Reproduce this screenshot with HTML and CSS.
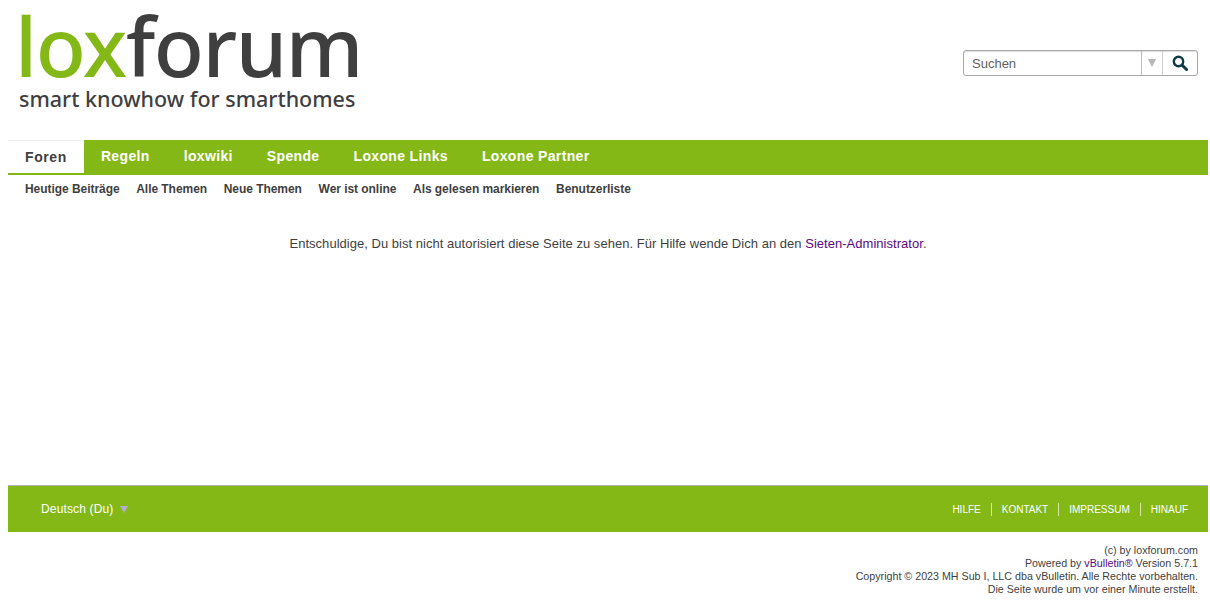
FILE: index.html
```html
<html>
	<head>
		<meta charset="utf-8">
		<title>loxforum</title>
		<link rel="stylesheet" href="styles.css">
	</head>
	<body>
		<div class="header">
			<a class="logo" href="#">
				<span class="logoName"><span class="logoLox">lox</span>forum</span>
				<span class="logoClaim">smart knowhow for smarthomes</span>
			</a>
			<div class="search">
				<div class="searchField">Suchen</div>
				<div class="searchArrow"><span class="arrowDown"></span></div>
				<div class="searchBtn">
					<svg width="16" height="16" viewBox="0 0 16 16">
						<circle cx="6.5" cy="6.5" r="4.7" fill="none" stroke="#0e3a46" stroke-width="2.4"/>
						<path d="M10 10 L14.5 14.5" stroke="#0e3a46" stroke-width="3" stroke-linecap="round"/>
					</svg>
				</div>
			</div>
		</div>
		<div class="nav">
			<a class="navItem current" href="#">Foren</a>
			<a class="navItem" href="#">Regeln</a>
			<a class="navItem" href="#">loxwiki</a>
			<a class="navItem" href="#">Spende</a>
			<a class="navItem" href="#">Loxone Links</a>
			<a class="navItem" href="#">Loxone Partner</a>
		</div>
		<div class="subnav">
			<a href="#">Heutige Beiträge</a>
			<a href="#">Alle Themen</a>
			<a href="#">Neue Themen</a>
			<a href="#">Wer ist online</a>
			<a href="#">Als gelesen markieren</a>
			<a href="#">Benutzerliste</a>
		</div>
		<div class="message">
			Entschuldige, Du bist nicht autorisiert diese Seite zu sehen. Für Hilfe wende Dich an den <a href="#">Sieten-Administrator</a>.
		</div>
		<div class="footer">
			<div class="language">Deutsch (Du) <span class="arrowLang"></span></div>
			<div class="footerLinks">
				<a href="#">HILFE</a>
				<a href="#">KONTAKT</a>
				<a href="#">IMPRESSUM</a>
				<a href="#">HINAUF</a>
			</div>
		</div>
		<div class="copyright">
			<div>(c) by loxforum.com</div>
			<div>Powered by <a href="#">vBulletin®</a> Version 5.7.1</div>
			<div>Copyright © 2023 MH Sub I, LLC dba vBulletin. Alle Rechte vorbehalten.</div>
			<div>Die Seite wurde um vor einer Minute erstellt.</div>
		</div>
	</body>
</html>
```

FILE: styles.css
```css
body {
	margin: 8px 2px 8px 8px;
	background-color: #fff;
	font-family: "Liberation Sans", Arial, sans-serif;
	font-size: 12px;
	color: #3f3f3f;
}
a {
	text-decoration: none;
	color: inherit;
}
.header {
	display: flex;
	justify-content: space-between;
	height: 132px;
}
.logo {
	display: flex;
	flex-direction: column;
	padding-left: 7px;
	color: #3f3f3f;
	font-family: "Noto Sans", sans-serif;
}
.logoName {
	font-size: 82px;
	font-weight: 500;
	line-height: 75px;
	letter-spacing: -1.4px;
}
.logoLox {
	color: #84b816;
}
.logoClaim {
	margin: 3px 0 0 4px;
	font-size: 21.5px;
	font-weight: 500;
	line-height: 26px;
}
.search {
	display: flex;
	align-self: flex-start;
	margin: 42px 10px 0 0;
	height: 26px;
	width: 235px;
	border: 1px solid #a8a8a8;
	border-radius: 3px;
	box-sizing: border-box;
	box-shadow: inset 0 1px 1px #ddd;
}
.searchField {
	flex: 1;
	padding-left: 8px;
	font-size: 13px;
	line-height: 26px;
	color: #5f5f5f;
}
.searchArrow {
	display: flex;
	align-items: center;
	justify-content: center;
	width: 20px;
	border-left: 1px solid #bbb;
}
.arrowDown {
	border-left: 4px solid transparent;
	border-right: 4px solid transparent;
	border-top: 8px solid #b5b5b5;
}
.searchBtn {
	display: flex;
	align-items: center;
	justify-content: center;
	width: 34px;
	border-left: 1px solid #ccc;
}
.nav {
	display: flex;
	height: 35px;
	background-color: #84b816;
}
.navItem {
	padding: 0 17px;
	font-size: 14px;
	font-weight: bold;
	line-height: 32px;
	color: #fff;
	letter-spacing: 0.35px;
}
.current {
	height: 33px;
	background-color: #fff;
	color: #3f3f3f;
	line-height: 33px;
	border-top: 1px solid #eee;
	box-sizing: border-box;
	letter-spacing: 0.6px;
}
.subnav {
	display: flex;
	gap: 16.7px;
	padding-left: 17px;
	height: 28px;
	line-height: 28px;
	font-weight: bold;
	letter-spacing: -0.05px;
}
.message {
	height: 282px;
	padding-top: 33px;
	box-sizing: border-box;
	text-align: center;
	font-size: 13px;
	line-height: 16px;
	letter-spacing: 0.03px;
}
.message a, .copyright a {
	color: #5b0a7f;
}
.footer {
	display: flex;
	justify-content: space-between;
	align-items: center;
	height: 47px;
	box-sizing: border-box;
	padding: 0 20px 0 33px;
	border-top: 1px solid #b4b4b4;
	background-color: #84b816;
	color: #fff;
}
.language {
	letter-spacing: 0.15px;
}
.arrowLang {
	display: inline-block;
	margin-left: 3px;
	border-left: 4px solid transparent;
	border-right: 4px solid transparent;
	border-top: 7px solid #b0b0c8;
}
.footerLinks {
	display: flex;
	font-size: 10px;
}
.footerLinks a {
	padding: 0 10px;
	border-left: 1px solid #d4e6a0;
	line-height: 13px;
}
.footerLinks a:first-child {
	border-left: none;
}
.footerLinks a:last-child {
	padding-right: 0;
}
.copyright {
	padding: 12px 10px 0 0;
	text-align: right;
	font-size: 10.7px;
	line-height: 13px;
}
```
